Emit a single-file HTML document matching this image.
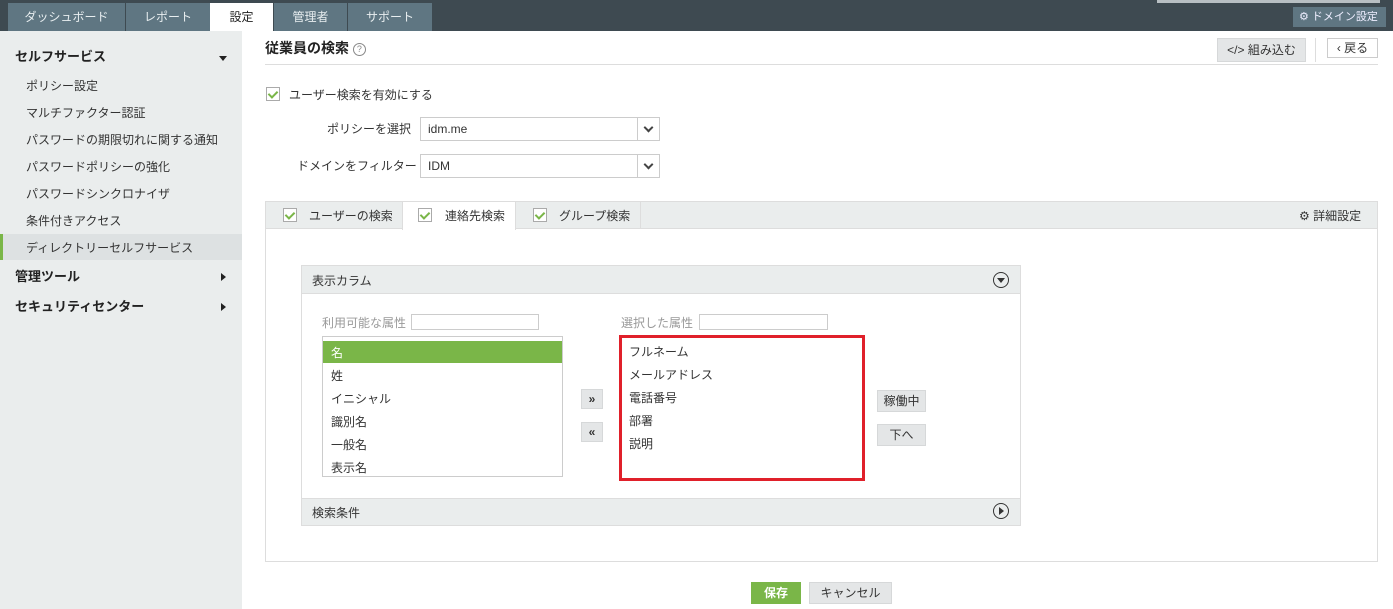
<!DOCTYPE html>
<html><head><meta charset="utf-8"><style>
*{box-sizing:border-box;margin:0;padding:0}
body{width:1393px;height:609px;overflow:hidden;background:#fff;font-family:"Liberation Sans","Noto Sans CJK JP",sans-serif;font-size:12px;color:#333;position:relative}
.abs{position:absolute}
.top{left:0;top:0;width:1393px;height:31px;background:#3e4a51}
.tab{top:3px;height:28px;background:#5f7682;color:#e8eef0;font-size:12px;text-align:center;line-height:28px}
.side{left:0;top:31px;width:242px;height:578px;background:#eaeded}
.si{left:26px;font-size:12px;color:#333}
.sh{left:15px;font-size:13px;font-weight:bold;color:#222}
.chk{width:14px;height:14px;border:1px solid #aaa;background:#fff}
.chk:after{content:"";position:absolute;left:3px;top:1px;width:4px;height:7px;border:solid #7ab648;border-width:0 2px 2px 0;transform:rotate(45deg)}
.sel{height:24px;border:1px solid #ccc;background:#fff;padding-left:7px;line-height:22px}
.sel .ar{position:absolute;right:0;top:0;width:22px;height:22px;border-left:1px solid #ccc}
.sel .ar:after{content:"";position:absolute;left:7px;top:6px;width:5px;height:5px;border:solid #444;border-width:0 2px 2px 0;transform:rotate(45deg)}
.btn{background:#e4e6e7;border:1px solid #d6d8d9;text-align:center;color:#333}
.li{left:8px;font-size:12px}
</style></head><body>
<div class="abs top"></div>
<div class="abs" style="left:1157px;top:0;width:223px;height:3px;background:#b8bfc3"></div>
<div class="abs tab" style="left:8px;width:117px">ダッシュボード</div>
<div class="abs tab" style="left:126px;width:84px">レポート</div>
<div class="abs tab" style="left:210px;width:63px;background:#fff;color:#222">設定</div>
<div class="abs tab" style="left:274px;width:73px">管理者</div>
<div class="abs tab" style="left:348px;width:84px">サポート</div>
<div class="abs" style="left:1293px;top:7px;width:93px;height:20px;background:#5f7682;color:#eef;font-size:11px;line-height:20px;padding-left:6px">⚙ ドメイン設定</div>

<div class="abs side"></div>
<div class="abs sh" style="top:46px">セルフサービス</div>
<div class="abs" style="left:219px;top:56px;border:4px solid transparent;border-top:5px solid #222"></div>
<div class="abs si" style="top:77px">ポリシー設定</div>
<div class="abs si" style="top:104px">マルチファクター認証</div>
<div class="abs si" style="top:131px">パスワードの期限切れに関する通知</div>
<div class="abs si" style="top:158px">パスワードポリシーの強化</div>
<div class="abs si" style="top:185px">パスワードシンクロナイザ</div>
<div class="abs si" style="top:212px">条件付きアクセス</div>
<div class="abs" style="left:0;top:234px;width:242px;height:26px;background:#dde1e2;border-left:3px solid #7ab648"></div>
<div class="abs si" style="top:239px">ディレクトリーセルフサービス</div>
<div class="abs sh" style="top:266px">管理ツール</div>
<div class="abs" style="left:221px;top:273px;border:4px solid transparent;border-left:5px solid #222"></div>
<div class="abs sh" style="top:296px">セキュリティセンター</div>
<div class="abs" style="left:221px;top:303px;border:4px solid transparent;border-left:5px solid #222"></div>

<div class="abs" style="left:265px;top:38px;font-size:14px;font-weight:bold;color:#222">従業員の検索 <span style="display:inline-block;width:13px;height:13px;border:1px solid #888;border-radius:50%;font-size:9px;line-height:11px;text-align:center;color:#888;font-weight:normal;vertical-align:1px">?</span></div>
<div class="abs btn" style="left:1217px;top:38px;width:89px;height:24px;line-height:22px">&lt;/&gt; 組み込む</div>
<div class="abs" style="left:1315px;top:38px;width:1px;height:24px;background:#ddd"></div>
<div class="abs" style="left:1327px;top:38px;width:51px;height:20px;border:1px solid #ccc;line-height:18px;text-align:center;font-size:12px">‹ 戻る</div>
<div class="abs" style="left:265px;top:64px;width:1113px;height:1px;background:#ddd"></div>

<div class="abs chk" style="left:266px;top:87px"></div>
<div class="abs" style="left:289px;top:86px">ユーザー検索を有効にする</div>
<div class="abs" style="left:327px;top:120px">ポリシーを選択</div>
<div class="abs sel" style="left:420px;top:117px;width:240px">idm.me<div class="ar"></div></div>
<div class="abs" style="left:297px;top:157px">ドメインをフィルター</div>
<div class="abs sel" style="left:420px;top:154px;width:240px">IDM<div class="ar"></div></div>

<div class="abs" style="left:265px;top:201px;width:1113px;height:361px;border:1px solid #ddd"></div>
<div class="abs" style="left:266px;top:202px;width:1111px;height:27px;background:#eaeded;border-bottom:1px solid #ddd"></div>
<div class="abs" style="left:402px;top:202px;width:114px;height:28px;background:#fff;border-left:1px solid #ddd;border-right:1px solid #ddd"></div>
<div class="abs" style="left:640px;top:202px;width:1px;height:27px;background:#ddd"></div>
<div class="abs chk" style="left:283px;top:208px"></div><div class="abs" style="left:309px;top:207px">ユーザーの検索</div>
<div class="abs chk" style="left:418px;top:208px"></div><div class="abs" style="left:445px;top:207px">連絡先検索</div>
<div class="abs chk" style="left:533px;top:208px"></div><div class="abs" style="left:559px;top:207px">グループ検索</div>
<div class="abs" style="left:1299px;top:207px">⚙ 詳細設定</div>

<div class="abs" style="left:301px;top:265px;width:720px;height:261px;border:1px solid #ddd"></div>
<div class="abs" style="left:302px;top:266px;width:718px;height:28px;background:#eaeded;border-bottom:1px solid #ddd;padding:6px 10px">表示カラム</div>
<div class="abs" style="left:993px;top:272px;width:16px;height:16px;border:1.5px solid #333;border-radius:50%"><div class="abs" style="left:3px;top:5px;border:4px solid transparent;border-top:5px solid #333"></div></div>
<div class="abs" style="left:322px;top:314px;color:#999">利用可能な属性</div>
<div class="abs" style="left:411px;top:314px;width:128px;height:16px;border:1px solid #ccc"></div>
<div class="abs" style="left:621px;top:314px;color:#999">選択した属性</div>
<div class="abs" style="left:699px;top:314px;width:129px;height:16px;border:1px solid #ccc"></div>
<div class="abs" style="left:322px;top:336px;width:241px;height:141px;border:1px solid #ccc;overflow:hidden">
<div class="abs" style="left:0;top:4px;width:239px;height:22px;background:#7ab648"></div>
<div class="abs li" style="top:7px;color:#fff">名</div>
<div class="abs li" style="top:30px">姓</div>
<div class="abs li" style="top:53px">イニシャル</div>
<div class="abs li" style="top:76px">識別名</div>
<div class="abs li" style="top:99px">一般名</div>
<div class="abs li" style="top:122px">表示名</div>
</div>
<div class="abs btn" style="left:581px;top:389px;width:22px;height:20px;font-weight:bold;line-height:18px">»</div>
<div class="abs btn" style="left:581px;top:422px;width:22px;height:20px;font-weight:bold;line-height:18px">«</div>
<div class="abs" style="left:619px;top:335px;width:246px;height:146px;border:3px solid #e0202a"></div>
<div class="abs" style="left:629px;top:343px">フルネーム</div>
<div class="abs" style="left:629px;top:366px">メールアドレス</div>
<div class="abs" style="left:629px;top:389px">電話番号</div>
<div class="abs" style="left:629px;top:412px">部署</div>
<div class="abs" style="left:629px;top:435px">説明</div>
<div class="abs btn" style="left:877px;top:390px;width:49px;height:22px;line-height:20px">稼働中</div>
<div class="abs btn" style="left:877px;top:424px;width:49px;height:22px;line-height:20px">下へ</div>
<div class="abs" style="left:302px;top:498px;width:718px;height:27px;background:#eaeded;border-top:1px solid #ddd;padding:5px 10px">検索条件</div>
<div class="abs" style="left:993px;top:503px;width:16px;height:16px;border:1.5px solid #333;border-radius:50%"><div class="abs" style="left:5px;top:3px;border:4px solid transparent;border-left:5px solid #333"></div></div>

<div class="abs" style="left:751px;top:582px;width:50px;height:22px;background:#7ab648;color:#fff;text-align:center;line-height:22px;font-weight:bold">保存</div>
<div class="abs btn" style="left:809px;top:582px;width:83px;height:22px;line-height:20px">キャンセル</div>
</body></html>
